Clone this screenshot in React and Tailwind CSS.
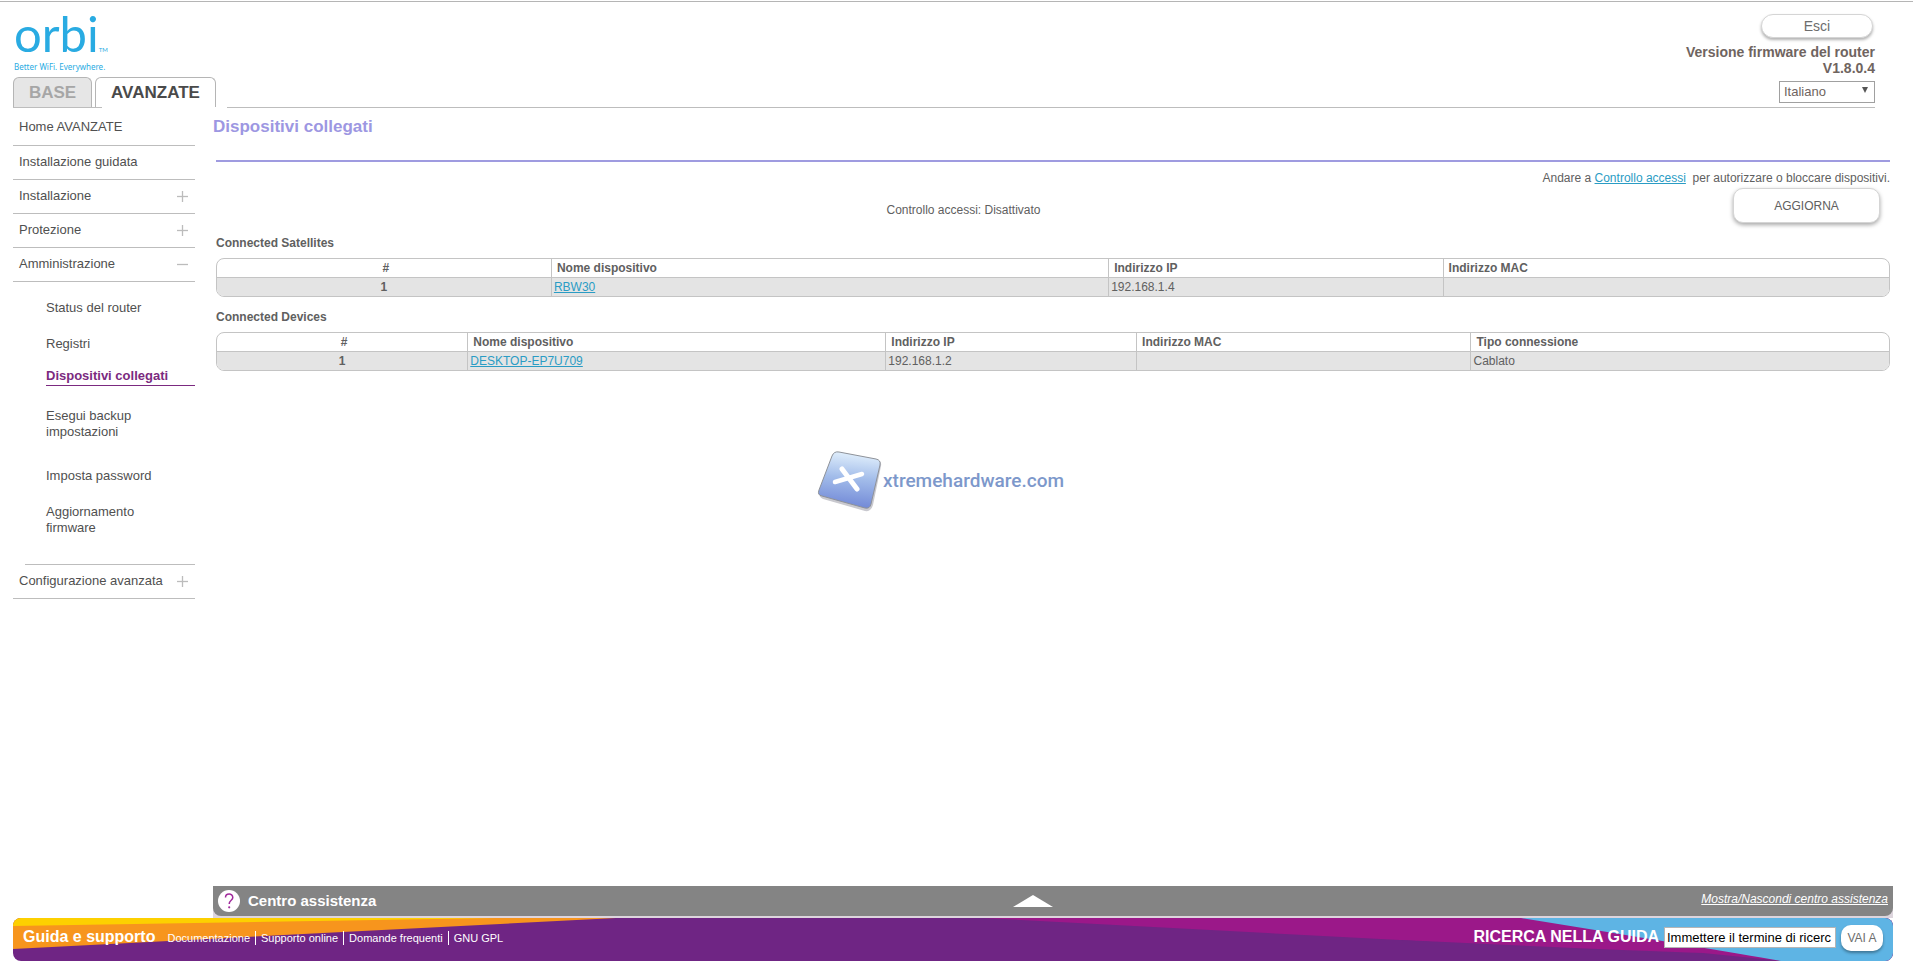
import React, { useState } from "react";

const adminItems = [
  { label: "Status del router", box: "h-[34px] mt-[9px]" },
  { label: "Registri", box: "h-[38px]" },
  { label: "Dispositivi collegati", box: "h-[20px] mt-[3px]", active: true },
  { label: "Esegui backup impostazioni", box: "h-[64px] mt-[6px] pr-[50px]" },
  { label: "Imposta password", box: "h-[40px]" },
  { label: "Aggiornamento firmware", box: "h-[48px] pr-[50px]" },
];

const satelliteColumns = [
  { label: "#", width: "w-[20%]" },
  { label: "Nome dispositivo", width: "w-[33.33%]" },
  { label: "Indirizzo IP", width: "w-[20%]" },
  { label: "Indirizzo MAC", width: "w-[26.67%]" },
];

const deviceColumns = [
  { label: "#", width: "w-[15%]" },
  { label: "Nome dispositivo", width: "w-[25%]" },
  { label: "Indirizzo IP", width: "w-[15%]" },
  { label: "Indirizzo MAC", width: "w-[20%]" },
  { label: "Tipo connessione", width: "w-[25%]" },
];

const footerLinks = ["Documentazione", "Supporto online", "Domande frequenti", "GNU GPL"];

const Logo = () => (
  <div className="h-[75px] pl-px pt-2 font-['Lato',sans-serif] text-[#29abe2]">
    <div className="flex h-[48px] items-end leading-none">
      <span className="text-[49px] leading-[50px]">orbi</span>
      <span className="pb-[4px] text-[6px] leading-[8px]">TM</span>
    </div>
    <p className="pt-[4px] font-['Noto_Sans',sans-serif] text-[8px] leading-[10px]">
      Better WiFi. Everywhere.
    </p>
  </div>
);

const Header = () => {
  const [language, setLanguage] = useState("Italiano");

  return (
    <header className="pl-[13px] pr-[38px]">
      <div className="flex justify-between">
        <div className="flex flex-col">
          <Logo />
          <nav className="flex gap-[3px] text-[17px] font-bold leading-[29px]">
            <a
              href="#base"
              className="w-[79px] rounded-t-md border border-b-0 border-[#b5b5b5] bg-[#e6e6e6] text-center text-[#a6a6a6]"
            >
              BASE
            </a>
            <a
              href="#avanzate"
              className="w-[121px] rounded-t-md border border-b-0 border-[#b5b5b5] text-center text-[#4a4a4a]"
            >
              AVANZATE
            </a>
          </nav>
        </div>
        <div className="flex flex-col items-end pt-3 text-[#6f6460]">
          <button className="mr-[2px] h-6 w-[112px] rounded-xl border border-[#d5d5d5] bg-white text-[14px] leading-5 text-[#6d6d6d] shadow-[0_2px_3px_rgba(0,0,0,0.3)]">
            Esci
          </button>
          <p className="pt-[6px] text-right text-[14px] font-bold leading-4">
            Versione firmware del router
            <br />
            V1.8.0.4
          </p>
          <div className="relative mt-[3px]">
            <select
              aria-label="Lingua"
              value={language}
              onChange={(e) => setLanguage(e.target.value)}
              className="h-[22px] w-24 appearance-none border border-[#a0a0a0] bg-white pl-1 text-[13px] leading-5"
            >
              <option>Italiano</option>
              <option>English</option>
            </select>
            <svg
              viewBox="0 0 6 6"
              className="pointer-events-none absolute right-[7px] top-2 h-[6px] w-[6px]"
            >
              <path d="M0 0h6L3 6z" fill="#555" />
            </svg>
          </div>
        </div>
      </div>
      <div className="flex h-px">
        <div className="w-[89px] bg-[#bdbdbd]" />
        <div className="w-[125px]" />
        <div className="flex-1 bg-[#bdbdbd]" />
      </div>
    </header>
  );
};

const ToggleIcon = ({ open }) => (
  <svg viewBox="0 0 11 11" className="h-[11px] w-[11px]" stroke="#bcbcbc" strokeWidth="1.3">
    <path d="M0 5.5h11" />
    {!open && <path d="M5.5 0v11" />}
  </svg>
);

const SectionButton = ({ label, open }) => (
  <button
    aria-expanded={open}
    className="flex h-[34px] w-full items-center justify-between border-b border-[#bdbdbd] pb-px pl-[6px] pr-[7px] text-left"
  >
    {label}
    <ToggleIcon open={open} />
  </button>
);

const Sidebar = () => (
  <nav className="w-[182px] shrink-0 text-[13px] leading-4 text-[#505050]">
    <a href="#home" className="flex h-[38px] items-center border-b border-[#bdbdbd] pl-[6px]">
      Home AVANZATE
    </a>
    <a href="#wizard" className="flex h-[34px] items-center border-b border-[#bdbdbd] pb-px pl-[6px]">
      Installazione guidata
    </a>
    <SectionButton label="Installazione" open={false} />
    <SectionButton label="Protezione" open={false} />
    <SectionButton label="Amministrazione" open />
    <ul className="pl-[33px]">
      {adminItems.map((item) => (
        <li key={item.label}>
          <a
            href="#admin"
            className={`flex ${item.box} ${
              item.active
                ? "items-start border-b border-[#7b2a80] pt-[2px] font-bold text-[#7b2a80]"
                : "items-center"
            }`}
          >
            {item.label}
          </a>
        </li>
      ))}
    </ul>
    <div className="ml-3 mt-[20px] h-px bg-[#bdbdbd]" />
    <SectionButton label="Configurazione avanzata" open={false} />
  </nav>
);

const DeviceTable = ({ title, columns, rows }) => (
  <section className="text-[12px] leading-[18px] text-[#606060]">
    <h2 className="font-bold">{title}</h2>
    <div className="mt-[6px] overflow-hidden rounded-lg border border-[#c4c4c4]">
      <table className="w-full table-fixed border-collapse" aria-label={title}>
        <thead>
          <tr>
            {columns.map((col) => (
              <th
                key={col.label}
                className={`${col.width} border-l border-[#c4c4c4] px-[5px] py-0 text-left first:border-l-0 first:pl-[9px] first:text-center`}
              >
                {col.label}
              </th>
            ))}
          </tr>
        </thead>
        <tbody>
          {rows.map((row) => (
            <tr key={row[1]} className="border-t border-[#c4c4c4] bg-[#e4e4e4]">
              {row.map((cell, i) => (
                <td
                  key={i}
                  className="border-l border-[#c4c4c4] px-[2px] py-0 first:border-l-0 first:text-center first:font-bold"
                >
                  {i === 1 ? (
                    <a href="#device" className="text-[#2a9cc4] underline">
                      {cell}
                    </a>
                  ) : (
                    cell
                  )}
                </td>
              ))}
            </tr>
          ))}
        </tbody>
      </table>
    </div>
  </section>
);

const Watermark = () => (
  <div className="pointer-events-none absolute left-[815px] top-[448px] flex items-center">
    <svg viewBox="0 0 68 66" className="h-[66px] w-[68px]">
      <defs>
        <linearGradient id="tile" x1="0.5" y1="0" x2="0.4" y2="1">
          <stop offset="0" stopColor="#e2f0fc" />
          <stop offset="0.45" stopColor="#a3bdea" />
          <stop offset="1" stopColor="#6f86d6" />
        </linearGradient>
      </defs>
      <path
        d="M26 5L62 12Q67 13 66 18L58 57Q56 64 50 63L8 51Q3 49 5 44L18 9Q20 4 26 5z"
        fill="#c9c9cf"
      />
      <path
        d="M24 4L61 11Q66 12 65 17L56 56Q55 61 50 60L7 48Q2 47 4 42L17 8Q19 3 24 4z"
        fill="url(#tile)"
        stroke="#8e9299"
        strokeWidth="1"
      />
      <path d="M27 21L42 41" stroke="#fff" strokeWidth="5" strokeLinecap="round" />
      <path d="M20 34L47 26" stroke="#fff" strokeWidth="4.5" strokeLinecap="round" />
    </svg>
    <span className="font-['Roboto',sans-serif] text-[19px] font-medium leading-[30px] text-[#7d98cb]">
      xtremehardware.com
    </span>
  </div>
);

const Content = () => (
  <main className="min-w-0 flex-1 pl-[18px] pr-[23px]">
    <h1 className="pt-[9px] text-[17px] font-bold leading-[20px] text-[#9d97e2]">
      Dispositivi collegati
    </h1>
    <div className="pl-[3px] text-[12px] text-[#606060]">
      <div className="mt-[23px] h-[2px] bg-[#9f9be0]" />
      <p className="pt-[7px] text-right leading-[18px]">
        Andare a{" "}
        <a href="#access" className="text-[#2a9cc4] underline">
          Controllo accessi
        </a>
        &nbsp; per autorizzare o bloccare dispositivi.
      </p>
      <div className="grid grid-cols-[1fr_auto] gap-[22px] pt-[1px] pr-[10px]">
        <p className="pt-[13px] text-center leading-[18px]">
          Controllo accessi: Disattivato
        </p>
        <button className="h-[35px] w-[147px] rounded-[10px] border border-[#d5d5d5] bg-white shadow-[0_2px_4px_rgba(0,0,0,0.35)]">
          AGGIORNA
        </button>
      </div>
      <div className="flex flex-col gap-[11px] pt-[11px]">
        <DeviceTable
          title="Connected Satellites"
          columns={satelliteColumns}
          rows={[["1", "RBW30", "192.168.1.4", ""]]}
        />
        <DeviceTable
          title="Connected Devices"
          columns={deviceColumns}
          rows={[["1", "DESKTOP-EP7U709", "192.168.1.2", "", "Cablato"]]}
        />
      </div>
    </div>
  </main>
);

const HelpBar = () => (
  <div className="ml-[213px] mr-[20px] bg-[#ddd5dd]">
    <div className="grid h-[30px] grid-cols-3 items-center rounded-b-lg bg-[#848484] pl-[5px] pr-[5px] text-white">
      <div className="flex items-center gap-2">
        <svg viewBox="0 0 22 22" className="h-[22px] w-[22px]">
          <circle cx="11" cy="11" r="11" fill="#fff" />
          <path
            d="M7.5 7.5C7.5 2.8 14.8 2.8 14.8 7.5C14.8 10.3 11.2 10.3 11.2 14"
            fill="none"
            stroke="#a02a9c"
            strokeWidth="1.5"
          />
          <circle cx="11.2" cy="17.3" r="1.1" fill="#a02a9c" />
        </svg>
        <h2 className="text-[15px] font-bold leading-5">Centro assistenza</h2>
      </div>
      <svg viewBox="0 0 40 12" className="ml-[238px] h-3 w-10">
        <path d="M20 0L40 12H0z" fill="#fff" />
      </svg>
      <a href="#help" className="pb-1 text-right text-[12px] italic leading-4 underline">
        Mostra/Nascondi centro assistenza
      </a>
    </div>
    <div className="h-[2px]" />
  </div>
);

const Footer = () => (
  <footer className="relative ml-[13px] mr-[20px] h-[43px] overflow-hidden rounded-lg bg-[#6f2584] text-white">
    <svg
      viewBox="0 0 1880 43"
      preserveAspectRatio="none"
      className="absolute inset-0 h-full w-full"
    >
      <path d="M0 0H603L0 31z" fill="#f7951d" />
      <path d="M0 0H483L0 8z" fill="#fdd000" />
      <path d="M970 0H1880V43H1700Q1560 33 1387 22z" fill="#9b1889" />
      <path d="M1387 22Q1600 32 1690 35L1770 43H1387z" fill="#6f2584" />
      <path d="M1508 0H1880V43H1768Q1700 31 1508 0z" fill="#5eb4e4" />
    </svg>
    <div className="relative flex h-full justify-between pl-[10px] pr-[10px]">
      <div className="flex items-start">
        <h2 className="pt-[9px] text-[16px] font-bold leading-5">Guida e supporto</h2>
        <ul className="flex pl-[3px] pt-[13px] text-[11px] leading-[14px]">
          {footerLinks.map((label, i) => (
            <li key={label} className={i > 0 ? "border-l border-white px-[5px]" : "pl-[9px] pr-[5px]"}>
              <a href="#support">{label}</a>
            </li>
          ))}
        </ul>
      </div>
      <form className="flex items-start" onSubmit={(e) => e.preventDefault()}>
        <label htmlFor="search" className="pr-[5px] pt-[9px] text-[16px] font-bold leading-5">
          RICERCA NELLA GUIDA
        </label>
        <input
          id="search"
          defaultValue="Immettere il termine di ricerc"
          className="mt-[9px] h-[21px] w-[172px] border border-[#b5b5b5] bg-white px-[2px] text-[13px] text-black"
        />
        <button className="ml-[5px] mt-[7px] h-[26px] w-[42px] rounded-[10px] bg-white text-[12px] text-[#6d6d6d] shadow-[0_2px_3px_rgba(0,0,0,0.35)]">
          VAI A
        </button>
      </form>
    </div>
  </footer>
);

const App = () => (
  <div className="relative flex min-h-screen flex-col bg-white font-['Liberation_Sans',Arial,sans-serif]">
    <div className="mt-px h-px bg-[#b5b5b5]" />
    <Header />
    <div className="flex flex-1 pl-[13px]">
      <Sidebar />
      <Content />
    </div>
    <HelpBar />
    <Footer />
    <Watermark />
  </div>
);

export default App;
